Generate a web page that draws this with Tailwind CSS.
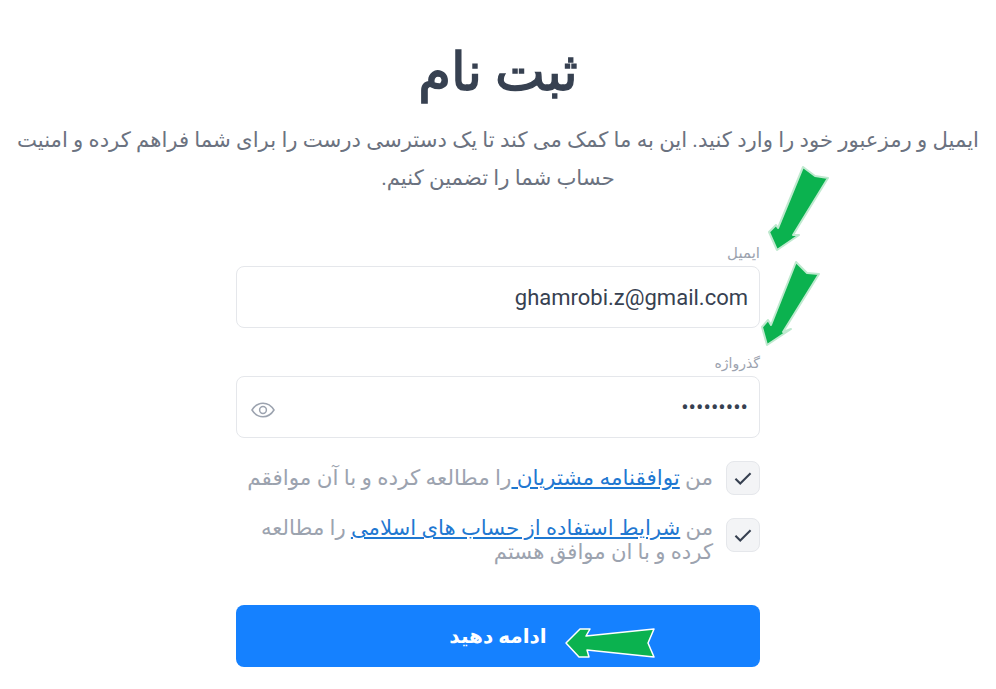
<!DOCTYPE html>
<html lang="fa" dir="rtl">
<head>
    <meta charset="UTF-8">
    <title>ثبت نام</title>
    <script src="https://cdn.jsdelivr.net/npm/@tailwindcss/browser@4"></script>
</head>
<body class="relative h-[689px] overflow-hidden bg-white font-['Roboto','DejaVu_Sans',sans-serif]">
    <div class="flex flex-col items-center px-4 pt-[36px]">
        <h1 class="text-[53px] leading-[72px] font-normal text-[#374151] [-webkit-text-stroke:1.5px_#374151]">ثبت نام</h1>
        <p class="mt-[13px] w-[970px] text-center text-[21.2px] leading-[38px] text-[#6b7280]">ایمیل و رمزعبور خود را وارد کنید. این به ما کمک می کند تا یک دسترسی درست را برای شما فراهم کرده و امنیت حساب شما را تضمین کنیم.</p>

        <form class="mt-[47px] w-[524px]">
            <label class="block text-[15px] leading-[18px] text-[#9ca3af]">ایمیل</label>
            <div class="mt-[4px] flex h-[62px] items-center rounded-lg border border-[#e5e7eb] px-[11px] text-[22px] text-[#374151]">ghamrobi.z@gmail.com</div>

            <label class="mt-[26px] block text-[14px] leading-[18px] text-[#9ca3af]">گذرواژه</label>
            <div class="mt-[4px] flex h-[62px] items-center justify-between rounded-lg border border-[#e5e7eb] pr-[11px] pl-[14px] text-[#374151]">
                <span class="text-[22px]">•••••••••</span>
                <svg class="mt-[5px] h-[24px] w-[24px] text-[#9ca3af]" viewBox="0 0 24 24" fill="none" stroke="currentColor" stroke-width="1.500"><path d="M1 12c2.800-4.500 6.400-6.800 11-6.800s8.200 2.300 11 6.800c-2.800 4.500-6.400 6.800-11 6.800S3.800 16.500 1 12z"/><circle cx="12" cy="12" r="3.400"/></svg>
            </div>

            <div class="mt-[23px] flex items-center gap-[13px]">
                <span class="flex h-[34px] w-[34px] shrink-0 items-center justify-center rounded-lg border border-[#e5e7eb] bg-[#f3f4f6]">
                    <svg class="h-[22px] w-[22px] text-[#374151]" viewBox="0 0 16 16" fill="none" stroke="currentColor" stroke-width="1.500"><path d="M2.500 8.500l3.500 3.500 7.500-7.500"/></svg>
                </span>
                <span class="text-[21.5px] leading-[24px] text-[#9ca3af]">من <a class="text-[#1f78d1] underline">توافقنامه مشتریان </a>را مطالعه کرده و با آن موافقم</span>
            </div>
            <div class="mt-[23px] flex items-start gap-[13px]">
                <span class="flex h-[34px] w-[34px] shrink-0 items-center justify-center rounded-lg border border-[#e5e7eb] bg-[#f3f4f6]">
                    <svg class="h-[22px] w-[22px] text-[#374151]" viewBox="0 0 16 16" fill="none" stroke="currentColor" stroke-width="1.500"><path d="M2.500 8.500l3.500 3.500 7.500-7.500"/></svg>
                </span>
                <span class="-mt-[2px] w-[470px] text-[21.2px] leading-[24px] text-[#9ca3af]">من <a class="text-[#1f78d1] underline">شرایط استفاده از حساب های اسلامی</a> را مطالعه کرده و با ان موافق هستم</span>
            </div>

            <button type="button" class="mt-[41px] h-[62px] w-full rounded-lg bg-[#1581ff] text-[20px] font-bold text-white">ادامه دهید</button>
        </form>
    </div>

    <svg class="pointer-events-none absolute top-0 left-0" width="996" height="689" viewBox="0 0 996 689">
        <g fill="#0bb24f" stroke="#bfe9cf" stroke-width="2" stroke-linejoin="round">
            <polygon points="803,167 815,176 828,178 793,235 799,235 777,250 769,232 776,225 778,228"/>
            <polygon points="796,262 807,273 819,274 783,332 791,329 767,345 762,327 768,320 771,325"/>
            <polygon points="566,643 580,629 590,629 586,636 654,629 648,643 654,657 587,650 589,657 579,657" stroke="#ffffff" stroke-width="1.500"/>
        </g>
    </svg>
</body>
</html>
